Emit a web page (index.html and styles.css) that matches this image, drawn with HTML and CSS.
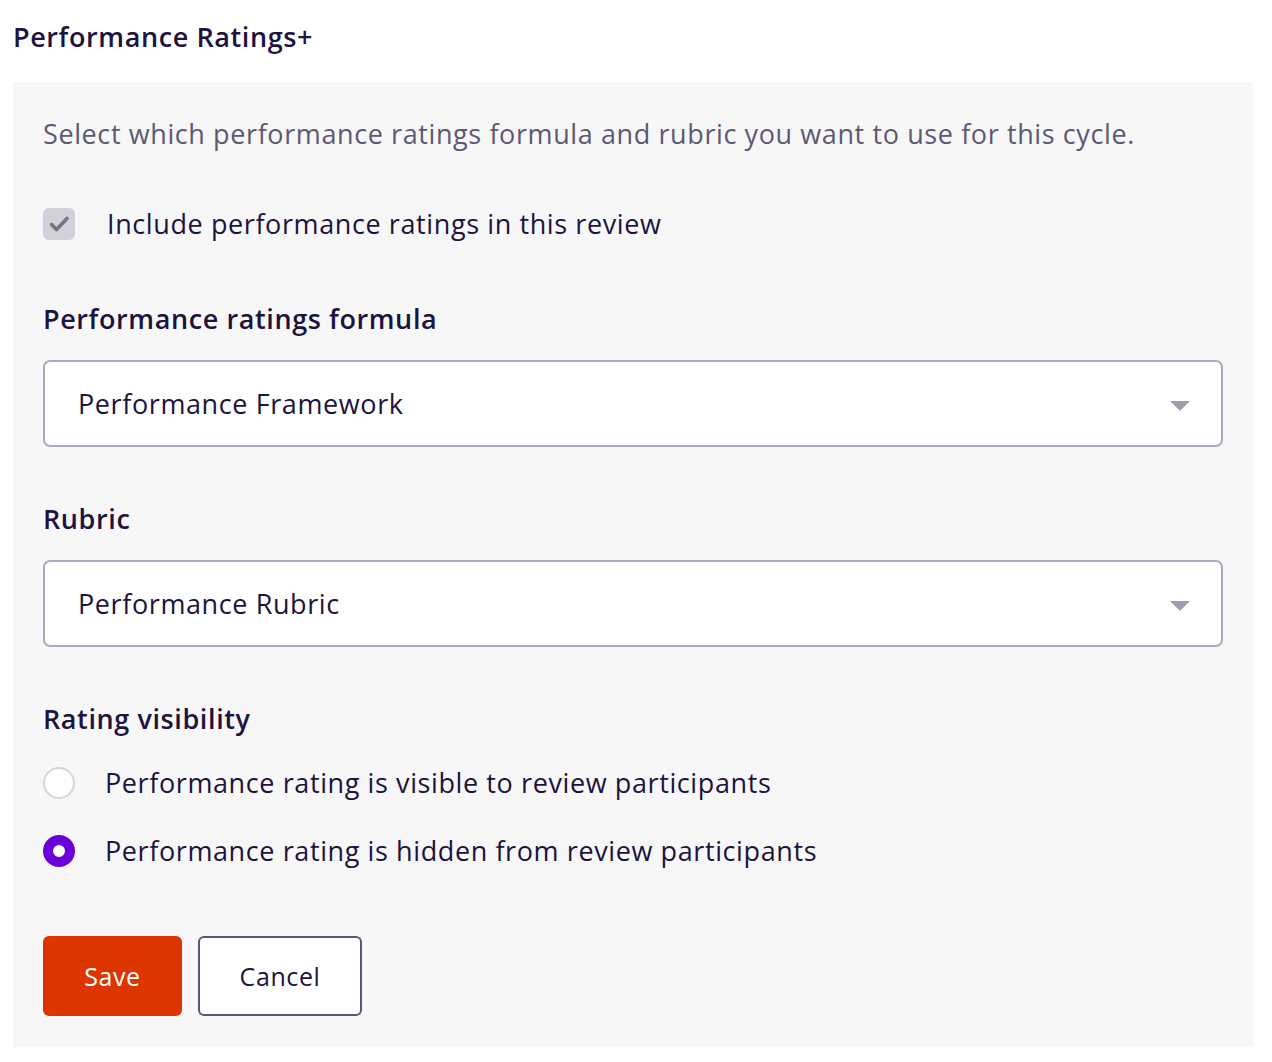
FILE: index.html
```html
<!DOCTYPE html>
<html lang="en">
<head>
  <meta charset="UTF-8">
  <title>Performance Ratings+</title>
  <link rel="stylesheet" href="styles.css">
</head>
<body>
  <h1 class="page-title">Performance Ratings+</h1>

  <div class="panel">
    <p class="intro">Select which performance ratings formula and rubric you want to use for this cycle.</p>

    <label class="check-row">
      <span class="checkbox">
        <svg width="24" height="24" viewBox="0 0 24 24"><path d="M4.5 12.5l5 5L20 6.5" fill="none" stroke="#76757e" stroke-width="3.6" stroke-linecap="round" stroke-linejoin="round"/></svg>
      </span>
      Include performance ratings in this review
    </label>

    <!-- Formula -->
    <h2 class="field-label first">Performance ratings formula</h2>
    <div class="select">
      <span>Performance Framework</span>
      <span class="caret"></span>
    </div>

    <!-- Rubric -->
    <h2 class="field-label">Rubric</h2>
    <div class="select">
      <span>Performance Rubric</span>
      <span class="caret"></span>
    </div>

    <!-- Visibility -->
    <h2 class="field-label">Rating visibility</h2>
    <div class="radio-list">
      <label class="radio-row">
        <span class="radio"></span>
        Performance rating is visible to review participants
      </label>
      <label class="radio-row">
        <span class="radio checked"></span>
        Performance rating is hidden from review participants
      </label>
    </div>

    <div class="actions">
      <button class="btn save">Save</button>
      <button class="btn cancel">Cancel</button>
    </div>
  </div>
</body>
</html>
```

FILE: styles.css
```css
body {
  margin: 0;
  padding: 0 19px 0 13px;
  font-family: 'Open Sans', 'Noto Sans', sans-serif;
  letter-spacing: 0.6px;
  color: #1c1340;
  background: #fff;
}

.page-title {
  margin: 0;
  padding-top: 19px;
  height: 82px;
  box-sizing: border-box;
  font-size: 27px;
  font-weight: 600;
  line-height: 36px;
}

.panel {
  background: #f7f7f7;
  padding: 32px 30px 31px;
}

.intro {
  margin: 0;
  font-size: 27px;
  line-height: 40px;
  color: #5e5874;
}

.check-row {
  display: flex;
  align-items: center;
  gap: 32px;
  margin-top: 54px;
  font-size: 27px;
  line-height: 32px;
}

.checkbox {
  width: 32px;
  height: 32px;
  border-radius: 6px;
  background: #d2d1db;
  display: flex;
  align-items: center;
  justify-content: center;
}

.field-label {
  margin: 54px 0 0;
  font-size: 27px;
  font-weight: 600;
  line-height: 36px;
}

.field-label.first {
  margin-top: 61px;
}

.select {
  margin-top: 23px;
  height: 87px;
  box-sizing: border-box;
  border: 2px solid #aba7bc;
  border-radius: 7px;
  background: #fff;
  display: flex;
  align-items: center;
  justify-content: space-between;
  padding: 0 31px 0 33px;
  font-size: 27px;
}

.caret {
  width: 0;
  height: 0;
  border-left: 10px solid transparent;
  border-right: 10px solid transparent;
  border-top: 10px solid #a19cb2;
  margin-top: 4px;
}

.radio-list {
  margin-top: 30px;
  display: flex;
  flex-direction: column;
  gap: 36px;
}

.radio-row {
  display: flex;
  align-items: center;
  gap: 30px;
  font-size: 27px;
  line-height: 32px;
}

.radio {
  width: 32px;
  height: 32px;
  box-sizing: border-box;
  border-radius: 50%;
  border: 2px solid #d6d5dd;
  background: #fff;
}

.radio.checked {
  border: 10px solid #6b00d9;
}

.actions {
  display: flex;
  gap: 16px;
  margin-top: 69px;
}

.btn {
  height: 80px;
  box-sizing: border-box;
  border-radius: 6px;
  font-family: inherit;
  font-size: 25px;
  letter-spacing: 0.6px;
  cursor: pointer;
}

.save {
  width: 139px;
  border: none;
  background: #dc3500;
  color: #fff;
}

.cancel {
  width: 164px;
  border: 2px solid #5c5478;
  background: #fff;
  color: #1c1340;
}
```
